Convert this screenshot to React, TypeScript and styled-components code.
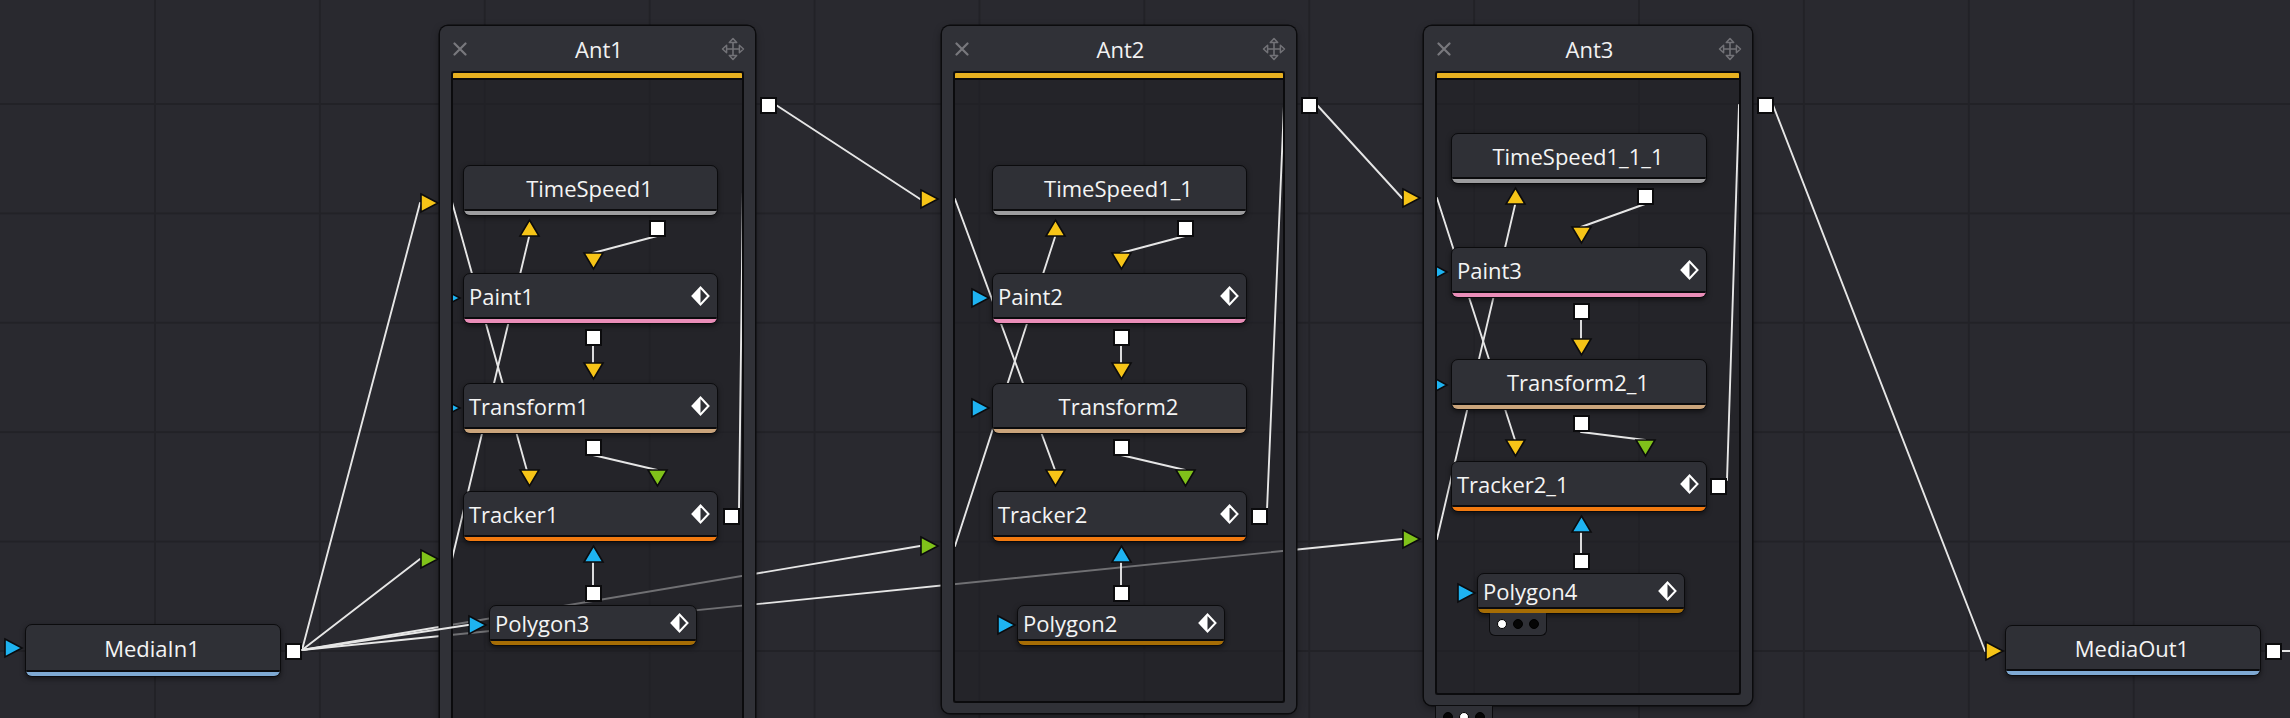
import styled, { createGlobalStyle } from "styled-components";

const GlobalStyle = createGlobalStyle`
  html, body {
    margin: 0;
    padding: 0;
    background: #29292f;
  }
  body {
    font-family: "Open Sans", "Noto Sans", sans-serif;
  }
`;

const C = {
  yellow: "#f6c417",
  green: "#80c21a",
  blue: "#1eb3f1",
  ink: "#0b0b0d",
};

const BAR = {
  time: "#9c9c9e",
  paint: "#ea8db8",
  xf: "#caa47b",
  track: "#f27a10",
  poly: "#a66d05",
  media: "#7ea9d3",
};

type NodeSpec = {
  name: string;
  x: number;
  y: number;
  w: number;
  h: number;
  bar: string;
  center?: boolean;
  icon?: boolean;
};
type PinSpec = { kind: "right" | "down" | "up" | "out"; x: number; y: number; color?: string };
type Wire = [number, number, number, number];
type BadgeSpec = { x: number; y: number; dots: boolean[] };

type GroupSpec = {
  title: string;
  x: number;
  y: number;
  w: number;
  h: number;
  nodes: NodeSpec[];
  pins: PinSpec[];
  wires: Wire[];
  inputs: PinSpec[];
  output: PinSpec;
  badges?: BadgeSpec[];
  foot?: BadgeSpec;
};

const pin = (kind: PinSpec["kind"], x: number, y: number, color?: string): PinSpec => ({ kind, x, y, color });

const groups: GroupSpec[] = [
  {
    title: "Ant1",
    x: 440,
    y: 26,
    w: 315,
    h: 714,
    nodes: [
      { name: "TimeSpeed1", x: 463, y: 165, w: 255, h: 51, bar: BAR.time, center: true },
      { name: "Paint1", x: 463, y: 273, w: 255, h: 51, bar: BAR.paint, icon: true },
      { name: "Transform1", x: 463, y: 383, w: 255, h: 51, bar: BAR.xf, icon: true },
      { name: "Tracker1", x: 463, y: 491, w: 255, h: 51, bar: BAR.track, icon: true },
      { name: "Polygon3", x: 489, y: 605, w: 208, h: 41, bar: BAR.poly, icon: true },
    ],
    pins: [
      pin("up", 529, 228, C.yellow),
      pin("out", 657, 228),
      pin("down", 593, 261, C.yellow),
      pin("right", 451, 298, C.blue),
      pin("out", 593, 337),
      pin("down", 593, 371, C.yellow),
      pin("right", 451, 408, C.blue),
      pin("out", 593, 447),
      pin("down", 529, 478, C.yellow),
      pin("down", 657, 478, C.green),
      pin("out", 731, 516),
      pin("up", 593, 554, C.blue),
      pin("out", 593, 593),
      pin("right", 477, 625, C.blue),
    ],
    wires: [
      [452, 202, 529, 478],
      [529, 237, 452, 559],
      [657, 236, 593, 253],
      [593, 345, 593, 363],
      [593, 455, 657, 470],
      [739, 510, 744, 105],
      [593, 563, 593, 585],
    ],
    inputs: [pin("right", 429, 203, C.yellow), pin("right", 429, 559, C.green)],
    output: pin("out", 768, 105),
  },
  {
    title: "Ant2",
    x: 942,
    y: 26,
    w: 354,
    h: 687,
    nodes: [
      { name: "TimeSpeed1_1", x: 992, y: 165, w: 255, h: 51, bar: BAR.time, center: true },
      { name: "Paint2", x: 992, y: 273, w: 255, h: 51, bar: BAR.paint, icon: true },
      { name: "Transform2", x: 992, y: 383, w: 255, h: 51, bar: BAR.xf, center: true },
      { name: "Tracker2", x: 992, y: 491, w: 255, h: 51, bar: BAR.track, icon: true },
      { name: "Polygon2", x: 1017, y: 605, w: 208, h: 41, bar: BAR.poly, icon: true },
    ],
    pins: [
      pin("up", 1055, 228, C.yellow),
      pin("out", 1185, 228),
      pin("down", 1121, 261, C.yellow),
      pin("right", 980, 298, C.blue),
      pin("out", 1121, 337),
      pin("down", 1121, 371, C.yellow),
      pin("right", 980, 408, C.blue),
      pin("out", 1121, 447),
      pin("down", 1055, 478, C.yellow),
      pin("down", 1185, 478, C.green),
      pin("out", 1259, 516),
      pin("up", 1121, 554, C.blue),
      pin("out", 1121, 593),
      pin("right", 1006, 625, C.blue),
    ],
    wires: [
      [955, 199, 1055, 470],
      [1055, 237, 955, 546],
      [1185, 236, 1121, 253],
      [1121, 345, 1121, 363],
      [1121, 455, 1185, 470],
      [1267, 510, 1284, 105],
      [1121, 563, 1121, 585],
    ],
    inputs: [pin("right", 929, 199, C.yellow), pin("right", 929, 546, C.green)],
    output: pin("out", 1309, 105),
  },
  {
    title: "Ant3",
    x: 1424,
    y: 26,
    w: 328,
    h: 679,
    nodes: [
      { name: "TimeSpeed1_1_1", x: 1451, y: 133, w: 256, h: 51, bar: BAR.time, center: true },
      { name: "Paint3", x: 1451, y: 247, w: 256, h: 51, bar: BAR.paint, icon: true },
      { name: "Transform2_1", x: 1451, y: 359, w: 256, h: 51, bar: BAR.xf, center: true },
      { name: "Tracker2_1", x: 1451, y: 461, w: 256, h: 51, bar: BAR.track, icon: true },
      { name: "Polygon4", x: 1477, y: 573, w: 208, h: 41, bar: BAR.poly, icon: true },
    ],
    pins: [
      pin("up", 1515, 196, C.yellow),
      pin("out", 1645, 196),
      pin("down", 1581, 235, C.yellow),
      pin("right", 1438, 272, C.blue),
      pin("out", 1581, 311),
      pin("down", 1581, 347, C.yellow),
      pin("right", 1438, 385, C.blue),
      pin("out", 1581, 423),
      pin("down", 1515, 448, C.yellow),
      pin("down", 1645, 448, C.green),
      pin("out", 1718, 486),
      pin("up", 1581, 524, C.blue),
      pin("out", 1581, 561),
      pin("right", 1466, 593, C.blue),
    ],
    wires: [
      [1437, 198, 1515, 440],
      [1515, 205, 1437, 539],
      [1645, 204, 1581, 227],
      [1581, 319, 1581, 338],
      [1581, 432, 1645, 440],
      [1727, 480, 1739, 105],
      [1581, 533, 1581, 553],
    ],
    inputs: [pin("right", 1411, 198, C.yellow), pin("right", 1411, 539, C.green)],
    output: pin("out", 1765, 105),
    badges: [{ x: 1489, y: 613, dots: [true, false, false] }],
    foot: { x: 1435, y: 706, dots: [false, true, false] },
  },
];

const mediaNodes: NodeSpec[] = [
  { name: "MediaIn1", x: 25, y: 624, w: 256, h: 53, bar: BAR.media, center: true },
  { name: "MediaOut1", x: 2005, y: 625, w: 256, h: 51, bar: BAR.media, center: true },
];

const mediaPins: PinSpec[] = [
  pin("right", 13, 648, C.blue),
  pin("out", 293, 651),
  pin("right", 1994, 651, C.yellow),
  pin("out", 2273, 651),
];

const backWires: Wire[] = [
  [302, 650, 420, 203],
  [302, 650, 420, 559],
  [302, 650, 920, 546],
  [302, 650, 1402, 539],
  [776, 105, 920, 199],
  [1317, 105, 1402, 198],
  [1773, 105, 1985, 651],
  [2282, 651, 2290, 651],
];

const frontWires: Wire[] = [[302, 650, 468, 625]];

const Canvas = styled.div`
  position: relative;
  width: 2290px;
  height: 718px;
  overflow: hidden;
  background-color: #29292f;
  background-image: linear-gradient(to right, #222227 2px, transparent 2px),
    linear-gradient(to bottom, #222227 2px, transparent 2px);
  background-size: 164.9px 109.4px;
  background-position: -10.9px -6.4px;
`;

const WireLayer = styled.svg<{ $front?: boolean }>`
  position: absolute;
  left: 0;
  top: 0;
  z-index: ${(p) => (p.$front ? 4 : 0)};
  pointer-events: none;
`;

const Frame = styled.div`
  position: absolute;
  z-index: 1;
  display: grid;
  grid-template-columns: 11px 1fr 11px;
  grid-template-rows: 45px 1fr 10px;
  border-radius: 8px;
  overflow: hidden;
  box-shadow: 0 0 0 1.5px ${C.ink}, 0 3px 8px rgba(0, 0, 0, 0.45);
`;

const Header = styled.div`
  grid-column: 1 / -1;
  display: grid;
  grid-template-columns: 1fr auto 1fr;
  align-items: center;
  padding: 0 10px 0 13px;
  background: #303137;
  color: #f2f2f2;
  font-size: 22px;
`;

const Side = styled.div`
  background: #303137;
`;

const Foot = styled.div`
  grid-column: 1 / -1;
  background: #303137;
`;

const Inner = styled.div`
  position: relative;
  overflow: hidden;
  border: 2px solid ${C.ink};
  border-radius: 3px;
  background: rgba(34, 34, 39, 0.6);
`;

const TopBar = styled.div`
  height: 5px;
  background: #e7b020;
  border-bottom: 2px solid ${C.ink};
`;

const InnerWires = styled.svg`
  position: absolute;
  left: 0;
  top: 0;
  z-index: 0;
`;

const Node = styled.div<{ $front?: boolean }>`
  position: absolute;
  z-index: ${(p) => (p.$front ? 2 : 1)};
  box-sizing: border-box;
  display: flex;
  flex-direction: column;
  background: #2f3036;
  border: 1.5px solid ${C.ink};
  border-radius: 7px;
  overflow: hidden;
  box-shadow: 0 2px 5px rgba(0, 0, 0, 0.5);
`;

const Label = styled.div<{ $center?: boolean }>`
  flex: 1;
  display: flex;
  align-items: center;
  justify-content: ${(p) => (p.$center ? "center" : "space-between")};
  padding: 0 7px 0 5px;
  color: #f4f4f4;
  font-size: 22px;
  line-height: 1;
  white-space: nowrap;
`;

const Bar = styled.div<{ $color: string }>`
  height: 4px;
  border-top: 2px solid ${C.ink};
  background: ${(p) => p.$color};
`;

const Tri = styled.svg`
  position: absolute;
  z-index: 3;
  overflow: visible;
`;

const Square = styled.div`
  position: absolute;
  z-index: 3;
  box-sizing: border-box;
  width: 17px;
  height: 17px;
  background: #ffffff;
  border: 2px solid ${C.ink};
`;

const Badge = styled.div`
  position: absolute;
  z-index: 2;
  box-sizing: border-box;
  display: flex;
  align-items: center;
  justify-content: center;
  gap: 6px;
  width: 58px;
  height: 23px;
  padding-bottom: 1px;
  background: #2f3036;
  border: 1.5px solid ${C.ink};
  border-top: none;
  border-radius: 0 0 6px 6px;
`;

const Dot = styled.span<{ $on?: boolean }>`
  box-sizing: border-box;
  width: 10px;
  height: 10px;
  border-radius: 50%;
  background: ${(p) => (p.$on ? "#ffffff" : "#050505")};
  border: 1.5px solid #000;
`;

function Diamond() {
  return (
    <svg width="19" height="20" viewBox="0 0 19 20">
      <path d="M9.5 1.5 L17.5 10 L9.5 18.5 L1.5 10 Z" fill="none" stroke="#fff" strokeWidth="2" strokeLinejoin="miter" />
      <path d="M9.5 1.5 L1.5 10 L9.5 18.5 Z" fill="#fff" />
    </svg>
  );
}

function CloseIcon() {
  return (
    <svg width="14" height="14" viewBox="0 0 14 14" style={{ justifySelf: "start" }}>
      <path d="M1.5 1.5 L12.5 12.5 M12.5 1.5 L1.5 12.5" stroke="#78787d" strokeWidth="2.2" strokeLinecap="round" />
    </svg>
  );
}

function MoveIcon() {
  const s = "#727277";
  return (
    <svg width="24" height="24" viewBox="0 0 24 24" style={{ justifySelf: "end" }}>
      <path d="M12 5 V19 M5 12 H19" stroke={s} strokeWidth="1.6" />
      <polygon points="12,1.5 8.3,5.6 15.7,5.6" fill="#303137" stroke={s} strokeWidth="1.5" strokeLinejoin="round" />
      <polygon points="12,22.5 8.3,18.4 15.7,18.4" fill="#303137" stroke={s} strokeWidth="1.5" strokeLinejoin="round" />
      <polygon points="1.5,12 5.6,8.3 5.6,15.7" fill="#303137" stroke={s} strokeWidth="1.5" strokeLinejoin="round" />
      <polygon points="22.5,12 18.4,8.3 18.4,15.7" fill="#303137" stroke={s} strokeWidth="1.5" strokeLinejoin="round" />
    </svg>
  );
}

function Pin({ p, ox = 0, oy = 0 }: { p: PinSpec; ox?: number; oy?: number }) {
  if (p.kind === "out") {
    return <Square style={{ left: p.x - 8.5 - ox, top: p.y - 8.5 - oy }} />;
  }
  const right = p.kind === "right";
  const w = right ? 19 : 21;
  const h = right ? 20 : 18;
  const pts = right ? "1,1 18,10 1,19" : p.kind === "down" ? "1,1 20,1 10.5,17" : "10.5,1 20,17 1,17";
  return (
    <Tri width={w} height={h} style={{ left: p.x - w / 2 - ox, top: p.y - h / 2 - oy }}>
      <polygon points={pts} fill={p.color} stroke={C.ink} strokeWidth="1.6" />
    </Tri>
  );
}

function Lines({ wires }: { wires: Wire[] }) {
  return (
    <>
      {wires.map(([x1, y1, x2, y2], i) => (
        <line key={i} x1={x1} y1={y1} x2={x2} y2={y2} stroke="#e6e6e6" strokeWidth="1.9" strokeLinecap="round" />
      ))}
    </>
  );
}

function ToolNode({ n, ox = 0, oy = 0, front }: { n: NodeSpec; ox?: number; oy?: number; front?: boolean }) {
  return (
    <Node $front={front} style={{ left: n.x - ox, top: n.y - oy, width: n.w, height: n.h }}>
      <Label $center={n.center}>
        <span>{n.name}</span>
        {n.icon && <Diamond />}
      </Label>
      <Bar $color={n.bar} />
    </Node>
  );
}

function Dots({ b, ox = 0, oy = 0 }: { b: BadgeSpec; ox?: number; oy?: number }) {
  return (
    <Badge style={{ left: b.x - ox, top: b.y - oy }}>
      {b.dots.map((on, i) => (
        <Dot key={i} $on={on} />
      ))}
    </Badge>
  );
}

function Group({ g }: { g: GroupSpec }) {
  // padding-box origin of the inner panel, in canvas coordinates
  const ox = g.x + 11 + 2;
  const oy = g.y + 45 + 2;
  return (
    <>
      <Frame style={{ left: g.x, top: g.y, width: g.w, height: g.h }}>
        <Header>
          <CloseIcon />
          <span>{g.title}</span>
          <MoveIcon />
        </Header>
        <Side />
        <Inner>
          <TopBar />
          <InnerWires width="420" height="720" viewBox={`${ox} ${oy} 420 720`}>
            <Lines wires={g.wires} />
          </InnerWires>
          {g.nodes.map((n) => (
            <ToolNode key={n.name} n={n} ox={ox} oy={oy} />
          ))}
          {g.pins.map((p, i) => (
            <Pin key={i} p={p} ox={ox} oy={oy} />
          ))}
          {g.badges?.map((b, i) => (
            <Dots key={i} b={b} ox={ox} oy={oy} />
          ))}
        </Inner>
        <Side />
        <Foot />
      </Frame>
      {g.inputs.map((p, i) => (
        <Pin key={i} p={p} />
      ))}
      <Pin p={g.output} />
      {g.foot && <Dots b={g.foot} />}
    </>
  );
}

export default function App() {
  return (
    <>
      <GlobalStyle />
      <Canvas>
        <WireLayer width="2290" height="718" viewBox="0 0 2290 718">
          <Lines wires={backWires} />
        </WireLayer>
        {groups.map((g) => (
          <Group key={g.title} g={g} />
        ))}
        {mediaNodes.map((n) => (
          <ToolNode key={n.name} n={n} front />
        ))}
        {mediaPins.map((p, i) => (
          <Pin key={i} p={p} />
        ))}
        <WireLayer $front width="2290" height="718" viewBox="0 0 2290 718">
          <Lines wires={frontWires} />
        </WireLayer>
      </Canvas>
    </>
  );
}
